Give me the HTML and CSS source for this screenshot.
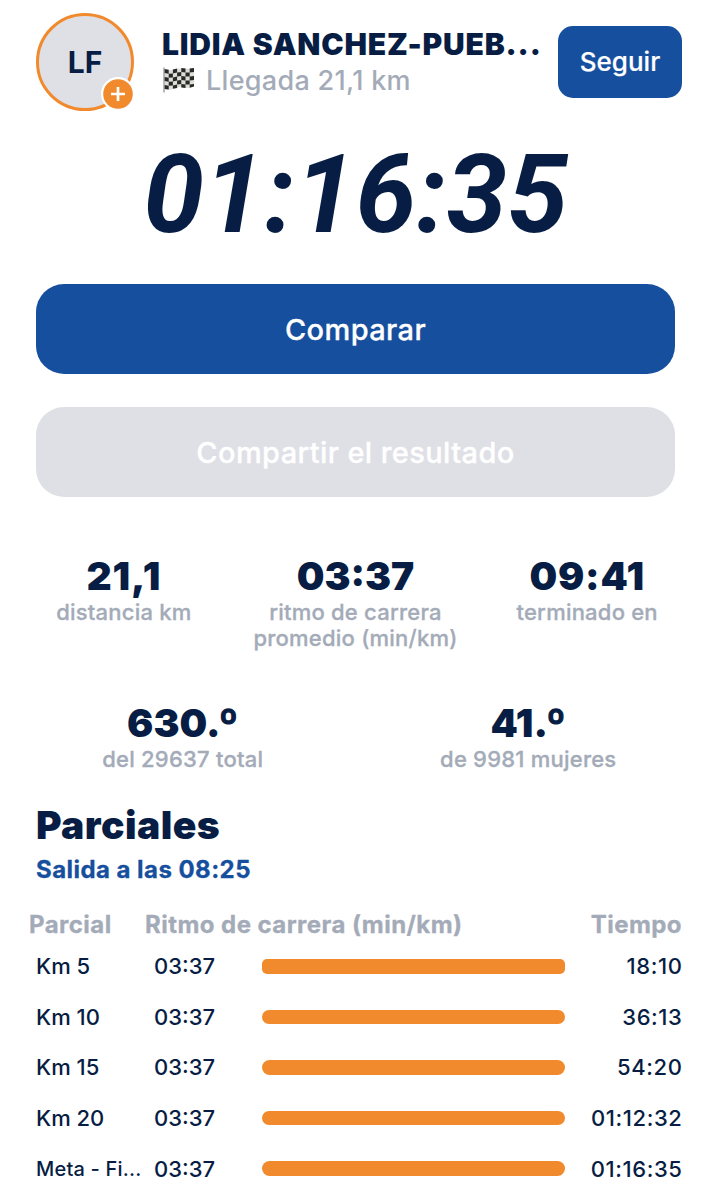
FILE: index.html
```html
<!DOCTYPE html>
<html lang="es">
<head>
<meta charset="utf-8">
<title>Resultado</title>
<link rel="stylesheet" href="styles.css">
</head>
<body>
<main class="page">
  <header class="head">
    <div class="avatar">LF
      <svg class="plus" viewBox="0 0 34 34"><circle cx="17" cy="17" r="17" fill="#fff"/><circle cx="17" cy="17" r="14.8" fill="#f08a2d"/><path d="M17 10v14M10 17h14" stroke="#fff" stroke-width="2.7"/></svg>
    </div>
    <div class="who">
      <h1 class="name">LIDIA SANCHEZ-PUEB<span class="dots">...</span></h1>
      <p class="status">
        <svg class="flag" viewBox="0 0 32 26">
          <path d="M1 2Q6 4 11 2.5T21 1.5T31 1V19Q26 22 21 20.5T11 21.5T2 22Z" fill="#deded9"/>
          <g fill="#292929">
            <path d="M1.5 2l4.2.8v4l-4.2-.8zM1.5 10l4.2.8v4l-4.2-.8zM1.5 18l4.2.8v3.7l-4.2-.5z"/>
            <path d="M5.7 6.8l4.2-.3v4l-4.2.3zM5.7 14.8l4.2-.3v4l-4.2.3z"/>
            <path d="M9.9 2.5l4.2-1v4l-4.2 1zM9.9 10.5l4.2-1v4l-4.2 1zM9.9 18.5l4.2-1v3.5l-4.2 .8z"/>
            <path d="M14.1 5.5l4.2-.6v4l-4.2.6zM14.1 13.5l4.2-.6v4l-4.2.6z"/>
            <path d="M18.3.9l4.2.5v4l-4.2-.5zM18.3 8.9l4.2.5v4l-4.2-.5zM18.3 16.9l4.2.5v3.6l-4.2-.6z"/>
            <path d="M22.5 5.4l4.2.2v4l-4.2-.2zM22.5 13.4l4.2.2v4l-4.2-.2z"/>
            <path d="M26.7 1.6l4.3-.6v4l-4.3.6zM26.7 9.6l4.3-.6v4l-4.3.6zM26.7 17.6l4.3-.6v2.4l-4.3 1.4z"/>
          </g>
          <path d="M1 .5v25" stroke="#777" stroke-width="1"/>
        </svg>
        <span>Llegada 21,1 km</span>
      </p>
    </div>
    <button class="follow">Seguir</button>
  </header>
  <div class="timer">01:16:35</div>
  <button class="action">Comparar</button>
  <button class="action disabled">Compartir el resultado</button>
  <section class="stats three">
    <div><strong class="loose">21,1</strong><span>distancia km</span></div>
    <div><strong>03:37</strong><span>ritmo de carrera<br>promedio (min/km)</span></div>
    <div><strong class="loose">09:41</strong><span>terminado en</span></div>
  </section>
  <section class="stats two">
    <div><strong>630.<b class="ord">º</b></strong><span>del 29637 total</span></div>
    <div><strong>41.<b class="ord">º</b></strong><span>de 9981 mujeres</span></div>
  </section>
  <h2 class="title">Parciales</h2>
  <p class="start">Salida a las 08:25</p>
  <div class="thead"><span>Parcial</span><span>Ritmo de carrera (min/km)</span><span>Tiempo</span></div>
  <div class="row first"><span>Km 5</span><span>03:37</span><i class="bar"></i><span class="time">18:10</span></div>
  <div class="row"><span>Km 10</span><span>03:37</span><i class="bar"></i><span class="time">36:13</span></div>
  <div class="row"><span>Km 15</span><span>03:37</span><i class="bar"></i><span class="time">54:20</span></div>
  <div class="row"><span>Km 20</span><span>03:37</span><i class="bar"></i><span class="time">01:12:32</span></div>
  <div class="row"><span class="meta">Meta - Fi...</span><span>03:37</span><i class="bar"></i><span class="time">01:16:35</span></div>
</main>
</body>
</html>
```
FILE: styles.css
```css
* { box-sizing: border-box; }
body { margin: 0; background: #fff; color: #071d43; font-family: Inter, sans-serif; }
h1, h2, p { margin: 0; }
button { border: 0; font-family: inherit; color: #fff; background: #164f9e; padding: 0; }
.page { height: 1200px; overflow: hidden; padding-top: 13px; }
.head { display: flex; height: 98px; padding: 0 29px 0 36px; }
.avatar { position: relative; width: 98px; height: 98px; border: 3.5px solid #f08a2d; border-radius: 50%; background: #dfe0e6; font-size: 30px; font-weight: 700; line-height: 92px; text-align: center; }
.plus { position: absolute; width: 34px; height: 34px; right: -4px; bottom: -3px; }
.who { width: 396px; padding: 13px 0 0 28px; white-space: nowrap; }
.name { font-size: 30px; line-height: 36px; font-weight: 900; letter-spacing: .8px; }
.dots { letter-spacing: .9px; }
.status { display: flex; align-items: center; gap: 11px; height: 36px; color: #a4abb8; font-size: 27px; font-weight: 500; letter-spacing: .3px; }
.flag { width: 32px; height: 26px; margin-left: 1px; }
.follow { width: 124px; height: 72px; margin-top: 12.5px; margin-left: auto; border-radius: 15px; font-size: 26px; font-weight: 500; -webkit-text-stroke: .2px; }
.timer { height: 173px; text-align: center; font: italic 700 109px/169px Roboto, sans-serif; }
.action { display: block; width: 639px; height: 90px; margin: 0 0 33px 36px; border-radius: 28px; font-size: 29px; font-weight: 500; letter-spacing: .4px; -webkit-text-stroke: .3px; }
.disabled { background: #dfe0e6; }
.stats { display: grid; text-align: center; }
.stats strong { display: block; font-size: 39px; line-height: 46px; font-weight: 900; }
.stats .loose { letter-spacing: .8px; }
.stats .ord { margin-left: -2px; font-weight: 900; -webkit-text-stroke: 1.3px; }
.stats span { display: block; font-size: 22px; line-height: 26px; font-weight: 500; color: #a4abb8; letter-spacing: .22px; -webkit-text-stroke: .3px; }
.three { grid-template-columns: repeat(3, 1fr); height: 147px; margin: 56px 8px 0; }
.two { grid-template-columns: repeat(2, 1fr); height: 100px; margin: 0 10px; }
.title { margin: 0 0 0 36px; font-size: 39px; line-height: 50px; font-weight: 900; letter-spacing: .45px; }
.start { margin-left: 36px; font-size: 24px; line-height: 40px; font-weight: 700; letter-spacing: .45px; color: #164f9e; -webkit-text-stroke: .3px; }
.thead { display: grid; grid-template-columns: 116px 1fr auto; height: 41px; padding: 0 29px; margin-top: 10px; font-size: 24px; line-height: 50px; font-weight: 700; letter-spacing: .45px; color: #a4abb8; -webkit-text-stroke: .3px; }
.row { display: grid; grid-template-columns: 118px 108px 303px 1fr; align-items: center; height: 50.6px; padding: 0 29px 0 36px; font-size: 22px; font-weight: 500; white-space: nowrap; }
.bar { height: 14.5px; border-radius: 8px; background: #f08a2d; }
.first .bar { border-radius: 5px; }
.time { margin-right: -.5px; text-align: right; letter-spacing: .6px; }
.meta { font-size: 20px; letter-spacing: .2px; }
```
